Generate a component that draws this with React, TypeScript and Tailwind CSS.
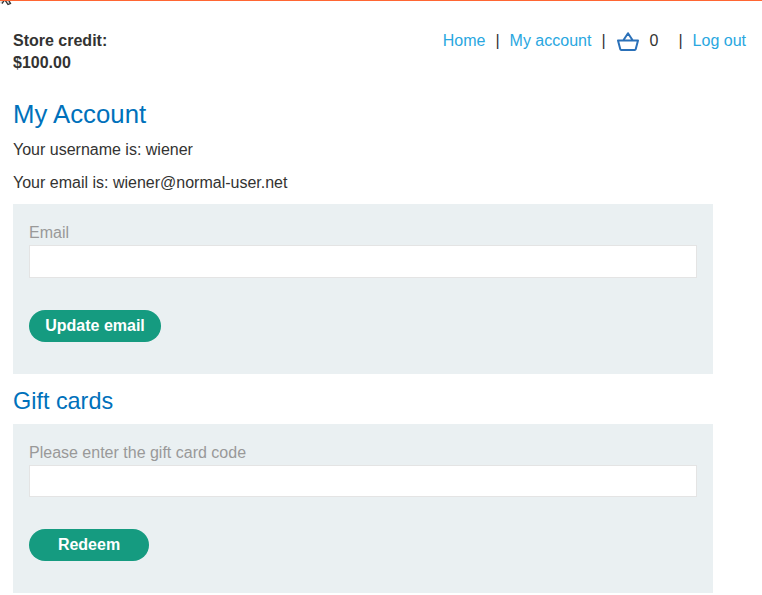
const FONT = "font-['Liberation_Sans',Arial,sans-serif]";

function Basket() {
  return (
    <svg width="22" height="20" viewBox="0 0 22 20" fill="none" stroke="#2a70b8" strokeWidth="2" strokeLinejoin="round" className="block">
      <path d="M1 9.5H21L18.7 18.3Q18.5 19 17.8 19H4.2Q3.5 19 3.3 18.3ZM6.2 9.5L11 2.2L15.8 9.5" />
    </svg>
  );
}

function Panel({ label, button, inputSize, buttonSize, className }: { label: string; button: string; inputSize: string; buttonSize: string; className: string }) {
  return (
    <form className={`w-[700px] bg-[#eaf0f2] px-4 pt-[17px] ${className}`} onSubmit={(e) => e.preventDefault()}>
      <label className="block h-6 leading-6 text-[#999999]">{label}</label>
      <input className={`block w-full border border-[#e4e4e4] bg-white px-2 outline-none ${inputSize}`} />
      <button className={`mt-8 block h-8 rounded-full bg-[#159b80] text-center font-bold leading-8 text-white ${buttonSize}`}>{button}</button>
    </form>
  );
}

export default function App() {
  return (
    <div className={`relative h-[595px] w-[762px] overflow-hidden border-t border-[#ff6633] bg-white pl-[13px] text-base text-[#333332] ${FONT}`}>
      <svg className="absolute left-0 -top-px" width="12" height="6" viewBox="0 0 12 6" fill="none">
        <path d="M1 0H9L11 4L8 5L6 2L4 1L2 4L0 3Z" fill="#dddddd" />
        <path d="M4.5 0L2 3.5M5 0L8 4.5L10.5 3.5L8.5 0" stroke="#333333" strokeWidth="1.3" />
      </svg>
      <header className="flex justify-between pr-4 pt-[29px] leading-[22px]">
        <p className="font-bold">Store credit:<br />$100.00</p>
        <nav className="flex h-[22px] items-center whitespace-pre">
          <a className="text-[#29a7df]">Home</a>
          <span className="ml-[10px]">|</span>
          <a className="ml-[10px] text-[#29a7df]">My account</a>
          <span className="ml-[10px]">|</span>
          <span className="ml-[11px]"><Basket /></span>
          <span className="ml-[11px]">0</span>
          <span className="ml-5">|</span>
          <a className="ml-[10px] text-[#29a7df]">Log out</a>
        </nav>
      </header>
      <h1 className="mt-6 h-8 text-[25.75px] leading-8 text-[#0071bb]">My Account</h1>
      <p className="mt-[9px] leading-[22px]">Your username is: wiener</p>
      <p className="mt-[11px] leading-[22px]">Your email is: wiener@normal-user.net</p>
      <Panel label="Email" button="Update email" inputSize="h-[33px]" buttonSize="w-[132px]" className="mt-[10px] h-[170px]" />
      <h2 className="mt-3 h-[30px] text-[23.4px] leading-[30px] text-[#0071bb]">Gift cards</h2>
      <Panel label="Please enter the gift card code" button="Redeem" inputSize="h-8" buttonSize="w-[120px]" className="mt-2 h-[169px]" />
    </div>
  );
}
